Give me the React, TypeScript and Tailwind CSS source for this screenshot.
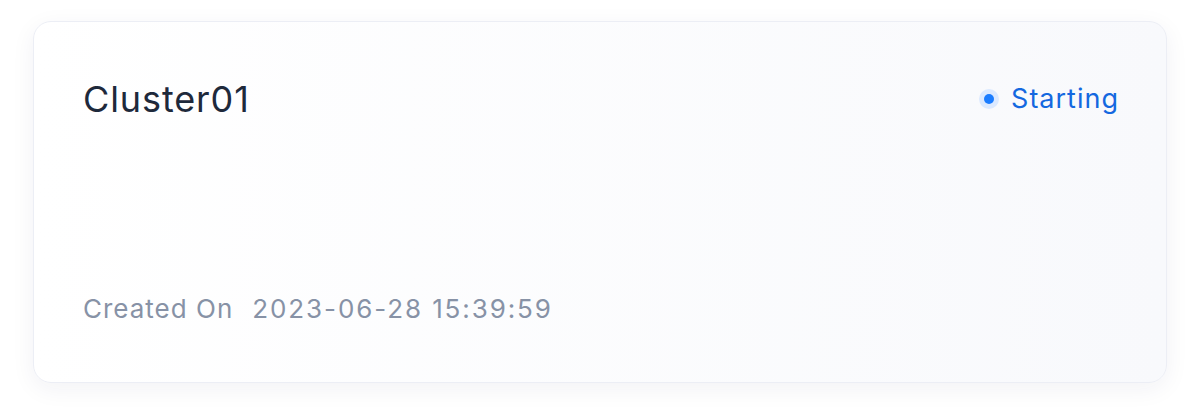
export default function App() {
  return (
    <div className="w-[1198px] h-[414px] bg-white pt-[21px] pl-[33px]" style={{ fontFamily: 'Inter, "Noto Sans", sans-serif' }}>
      <div className="w-[1134px] h-[362px] rounded-[18px] border border-[#eceef5] bg-gradient-to-r from-white to-[#f8f9fc] shadow-[0_6px_24px_rgba(30,40,90,0.06)] flex flex-col justify-between pt-[55px] pb-[57px] pl-[49px] pr-[47px]">
        <div className="flex items-center justify-between">
          <h1 className="text-[36px] leading-[44px] tracking-[0.9px] text-[#1e293b] font-normal">Cluster01</h1>
          <div className="flex items-center gap-[12px]">
            <span className="w-[20px] h-[20px] rounded-full bg-[#dbe9ff] flex items-center justify-center">
              <span className="w-[10px] h-[10px] rounded-full bg-[#1a7cff]" />
            </span>
            <span className="text-[27px] leading-[32px] tracking-[1px] text-[#1468e0]">Starting</span>
          </div>
        </div>
        <p className="text-[26px] leading-[32px] text-[#8792a6] flex">
          <span className="tracking-[1px]">Created On</span>
          <span className="ml-[19px] tracking-[1.9px]">2023-06-28 15:39:59</span>
        </p>
      </div>
    </div>
  );
}
